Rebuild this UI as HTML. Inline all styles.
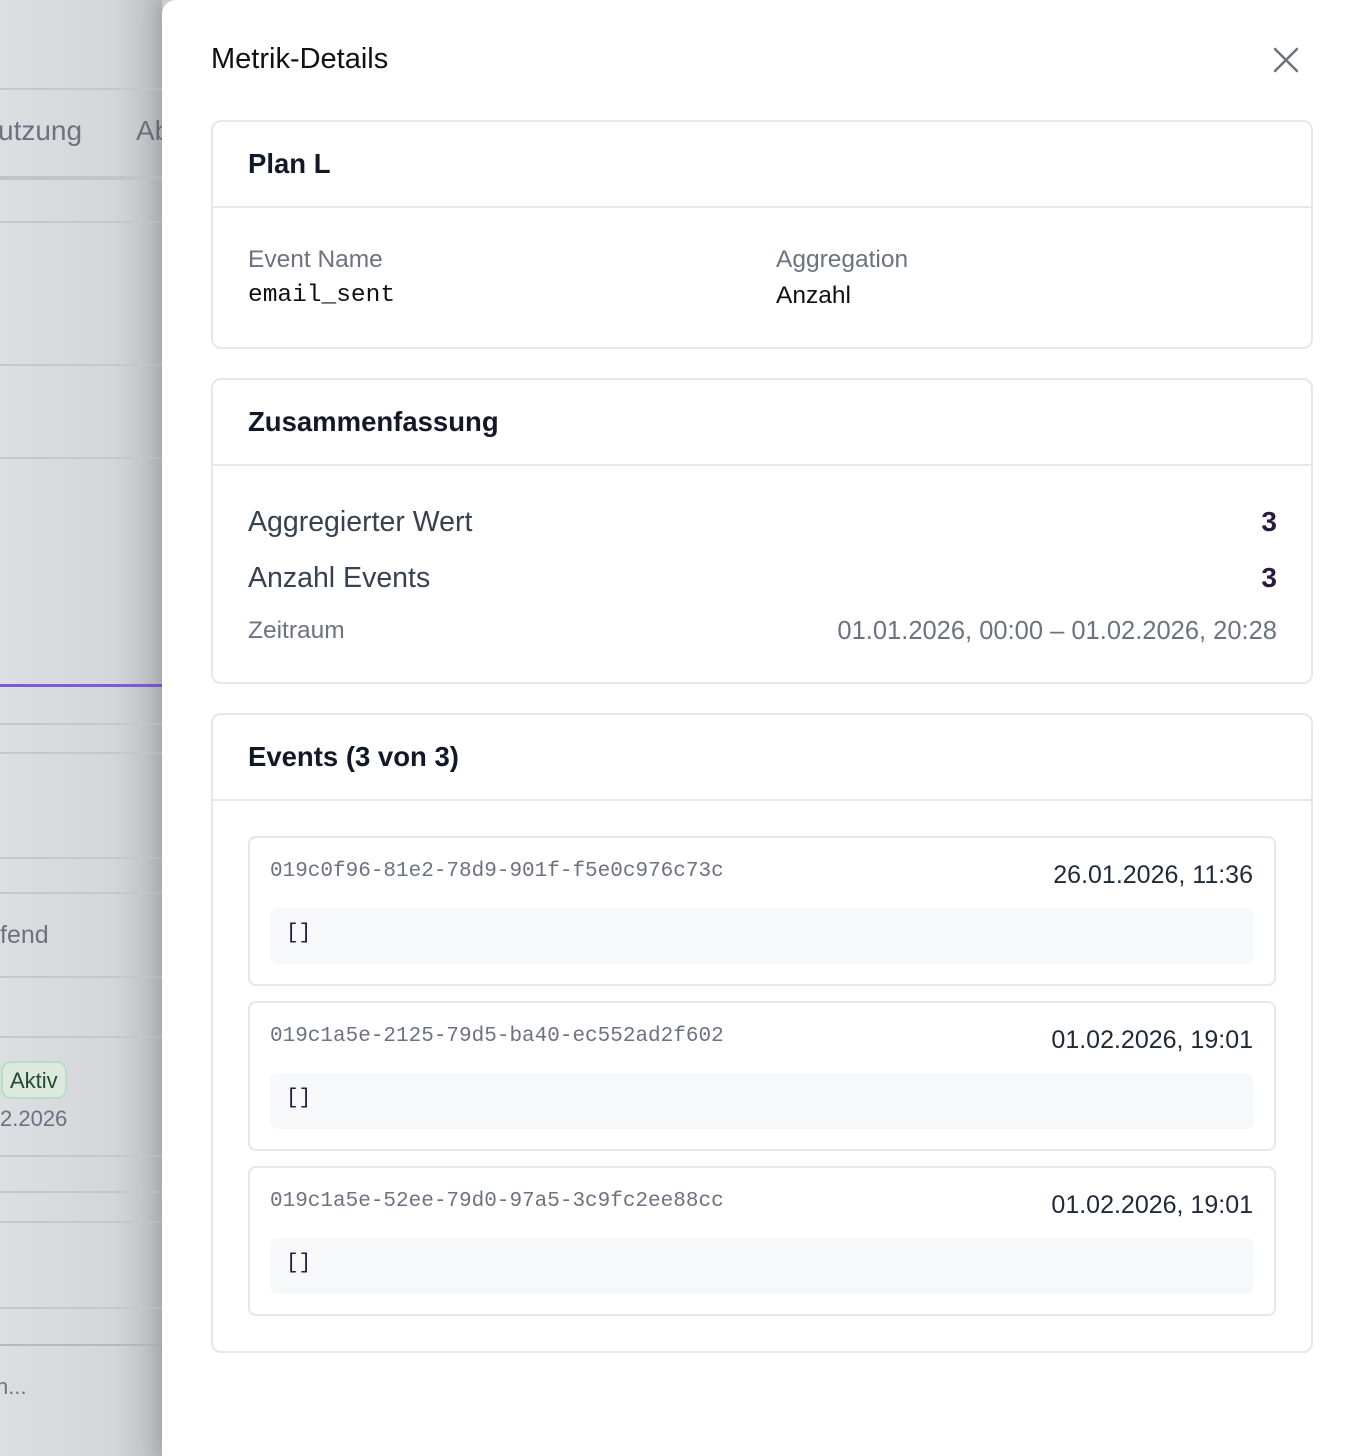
<!DOCTYPE html>
<html><head><meta charset="utf-8"><style>
*{box-sizing:border-box;margin:0;padding:0}
body{width:1362px;height:1456px;overflow:hidden;position:relative;font-family:"Liberation Sans",sans-serif;background:#d7d9dd}
.bg{position:absolute;left:0;top:0;width:162px;height:1456px;background:linear-gradient(90deg,#dcdee2 0%,#d4d6da 70%,#b9bbbf 100%)}
.hl{position:absolute;left:0;width:162px;height:2px;background:#c4c7cc}
.bt{position:absolute;color:#6b7280;font-size:28px}
.panel{position:absolute;left:162px;top:0;width:1200px;height:1456px;background:#fff;border-radius:14px 0 0 0;box-shadow:-6px 0 18px rgba(0,0,0,.12)}
.title{position:absolute;left:49px;top:43px;font-size:29px;color:#111}
.close{position:absolute;left:1110px;top:46px}
.card{position:absolute;left:49px;width:1102px;border:2px solid #e5e7eb;border-radius:10px;background:#fff}
.ch{height:86px;border-bottom:2px solid #e5e7eb;padding:26px 0 0 35px;font-size:27.5px;font-weight:600;color:#111827}
.lbl{position:absolute;font-size:24.5px;color:#6b7280}
.val{position:absolute;font-size:24.5px;color:#111}
.mono{font-family:"Liberation Mono","DejaVu Sans Mono",monospace}
.ev{position:absolute;left:35px;width:1028px;height:150px;border:2px solid #e5e7eb;border-radius:8px}
.id{position:absolute;left:20px;top:22px;font-size:21px;color:#6b7280}
.dt{position:absolute;right:21px;top:23px;font-size:25px;color:#1f2937}
.code{position:absolute;left:20px;top:70px;width:984px;height:56px;background:#f7f8fa;border-radius:8px;padding:14px 16px;font-size:21px;color:#2a1a40}
</style></head><body>
<div class="bg"></div>
<div class="hl" style="top:88px"></div>
<div class="hl" style="top:176px;height:4px;background:#c1c4c9"></div>
<div class="hl" style="top:221px"></div>
<div class="hl" style="top:364px"></div>
<div class="hl" style="top:457px"></div>
<div class="hl" style="top:684px;height:3px;background:#7b5bd6"></div>
<div class="hl" style="top:723px"></div>
<div class="hl" style="top:752px"></div>
<div class="hl" style="top:857px"></div>
<div class="hl" style="top:892px"></div>
<div class="hl" style="top:976px"></div>
<div class="hl" style="top:1036px"></div>
<div class="hl" style="top:1155px"></div>
<div class="hl" style="top:1191px"></div>
<div class="hl" style="top:1221px"></div>
<div class="hl" style="top:1307px"></div>
<div class="hl" style="top:1344px;background:#b5b8bd"></div>
<div class="bt" style="left:-2px;top:115px">utzung</div>
<div class="bt" style="left:136px;top:115px">Ab</div>
<div class="bt" style="left:0;top:921px;font-size:25px">fend</div>
<div style="position:absolute;left:1px;top:1061px;height:38px;padding:5px 7px;border:2px solid #b9dcc4;border-radius:10px;background:#dce8e0;color:#1f4d2c;font-size:22px">Aktiv</div>
<div class="bt" style="left:0;top:1106px;font-size:22px">2.2026</div>
<div class="bt" style="left:-4px;top:1374px;font-size:22px">n...</div>

<div class="panel">
<div class="title">Metrik-Details</div>
<svg class="close" width="28" height="28" viewBox="0 0 28 28"><path d="M3 3L25 25M25 3L3 25" stroke="#6b7280" stroke-width="2.5" stroke-linecap="round"/></svg>

<div class="card" style="top:120px;height:229px">
<div class="ch">Plan L</div>
<div class="lbl" style="left:35px;top:124px">Event Name</div>
<div class="val mono" style="left:35px;top:160px">email_sent</div>
<div class="lbl" style="left:563px;top:124px">Aggregation</div>
<div class="val" style="left:563px;top:160px">Anzahl</div>
</div>

<div class="card" style="top:378px;height:306px">
<div class="ch">Zusammenfassung</div>
<div class="lbl" style="left:35px;top:126px;font-size:28.5px;color:#374151">Aggregierter Wert</div>
<div class="val" style="right:34px;top:126px;font-size:28px;font-weight:700;color:#2a1a40">3</div>
<div class="lbl" style="left:35px;top:182px;font-size:28.5px;color:#374151">Anzahl Events</div>
<div class="val" style="right:34px;top:182px;font-size:28px;font-weight:700;color:#2a1a40">3</div>
<div class="lbl" style="left:35px;top:237px">Zeitraum</div>
<div class="lbl" style="right:34px;top:237px;font-size:25.5px">01.01.2026, 00:00 – 01.02.2026, 20:28</div>
</div>

<div class="card" style="top:713px;height:640px">
<div class="ch">Events (3 von 3)</div>
<div class="ev" style="top:121px"><div class="id mono">019c0f96-81e2-78d9-901f-f5e0c976c73c</div><div class="dt">26.01.2026, 11:36</div><div class="code mono">[]</div></div>
<div class="ev" style="top:286px"><div class="id mono">019c1a5e-2125-79d5-ba40-ec552ad2f602</div><div class="dt">01.02.2026, 19:01</div><div class="code mono">[]</div></div>
<div class="ev" style="top:451px"><div class="id mono">019c1a5e-52ee-79d0-97a5-3c9fc2ee88cc</div><div class="dt">01.02.2026, 19:01</div><div class="code mono">[]</div></div>
</div>
</div>
</body></html>
